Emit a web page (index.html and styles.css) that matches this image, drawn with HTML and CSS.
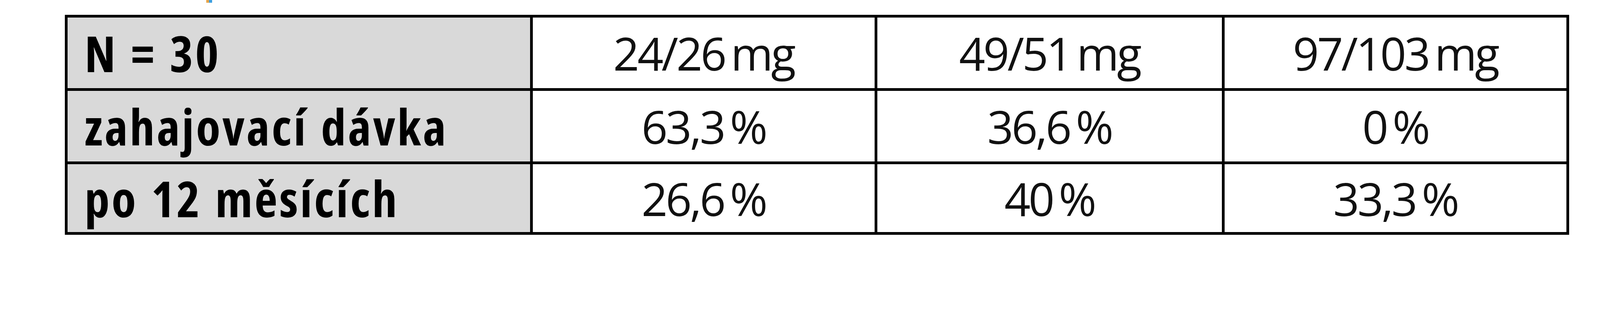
FILE: index.html
```html
<!DOCTYPE html>
<html lang="cs">
<head>
<meta charset="utf-8">
<title>Dávkování</title>
<link rel="stylesheet" href="styles.css">
</head>
<body>
<div class="caption"><span class="caption-stem"></span></div>
<table class="dose-table">
  <colgroup>
    <col class="col-label">
    <col class="col-a">
    <col class="col-b">
    <col class="col-c">
  </colgroup>
  <tr class="row-tall">
    <th class="label">N = 30</th>
    <td class="val">24/26 mg</td>
    <td class="val">49/51 mg</td>
    <td class="val">97/103 mg</td>
  </tr>
  <tr class="row-tall">
    <th class="label">zahajovací dávka</th>
    <td class="val">63,3 %</td>
    <td class="val">36,6 %</td>
    <td class="val">0 %</td>
  </tr>
  <tr class="row-short">
    <th class="label">po 12 měsících</th>
    <td class="val">26,6 %</td>
    <td class="val">40 %</td>
    <td class="val">33,3 %</td>
  </tr>
</table>
</body>
</html>
```
FILE: styles.css
```css
html, body {
  margin: 0;
  padding: 0;
  background: #ffffff;
}

body {
  font-family: "Open Sans", "Noto Sans", sans-serif;
  color: #000000;
}

.caption {
  height: 38px;
  display: flex;
  align-items: flex-start;
}

.caption-stem {
  display: block;
  width: 14.5px;
  height: 7px;
  margin-left: 528px;
  background: linear-gradient(to right, #e8a448 0 50%, #3d9fe0 50% 100%);
}

.dose-table {
  margin-left: 165.5px;
  width: 3851px;
  table-layout: fixed;
  border-collapse: separate;
  border-spacing: 7.24px;
  background: #000000;
}

.col-label { width: 1184px; }
.col-a { width: 874.6px; }
.col-b { width: 881.9px; }
.col-c { width: 874.6px; }

.row-tall th,
.row-tall td {
  height: 181px;
}

.row-short th,
.row-short td {
  height: 174px;
}

.dose-table th,
.dose-table td {
  padding: 0;
  vertical-align: middle;
  line-height: 1;
  white-space: nowrap;
}

.dose-table .label {
  background: #d9d9d9;
  text-align: left;
  padding-left: 44px;
  font-size: 128px;
  font-weight: 700;
  font-stretch: 75%;
  letter-spacing: 5px;
  word-spacing: 6px;
}

.dose-table .val {
  background: #ffffff;
  text-align: center;
  font-size: 117px;
  font-weight: 400;
  font-stretch: 100%;
  letter-spacing: -5px;
  word-spacing: -10px;
  color: #111111;
}
```
